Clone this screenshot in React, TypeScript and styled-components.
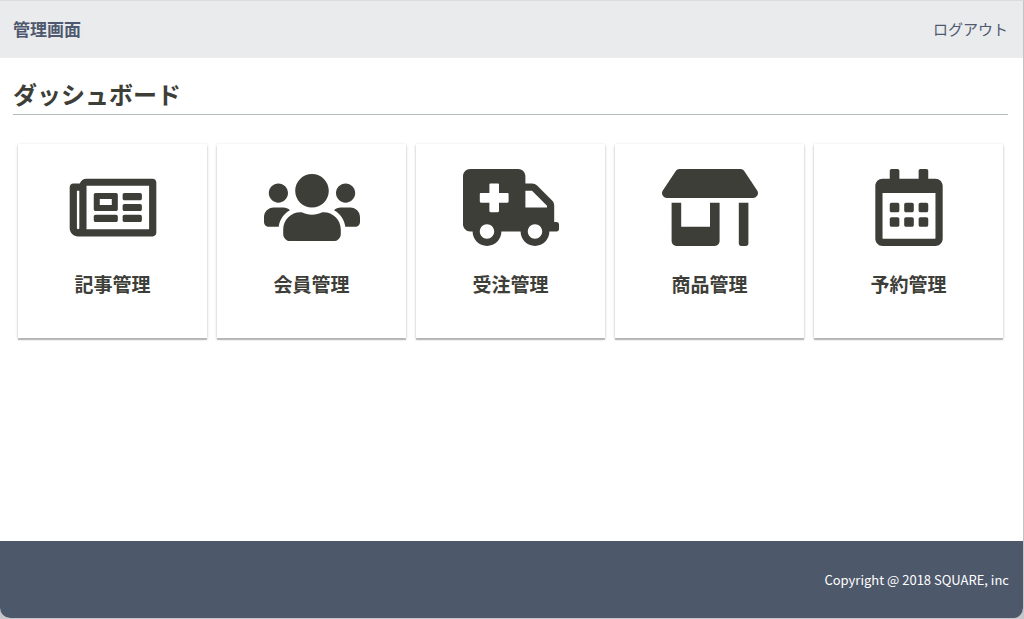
import React from 'react';
import styled, { createGlobalStyle } from 'styled-components';
import { FaRegNewspaper, FaUsers, FaAmbulance, FaStoreAlt, FaRegCalendarAlt } from 'react-icons/fa';
import type { IconType } from 'react-icons';

const GlobalStyle = createGlobalStyle`
  * {
    box-sizing: border-box;
  }
  body {
    margin: 0;
    background: #c6c7ca;
    color: #3e3e39;
    font-family: "Noto Sans CJK JP", sans-serif;
  }
  a {
    color: inherit;
    text-decoration: none;
  }
`;

const Page = styled.div`
  display: flex;
  flex-direction: column;
  min-height: calc(100vh - 1px);
  margin-bottom: 1px;
  background: #fff;
  border-top: 1px solid #dbdcdd;
  border-right: 1px solid #c3c4c5;
  border-radius: 0 0 10px 10px;
  overflow: hidden;
`;

const Header = styled.header`
  display: flex;
  align-items: center;
  justify-content: space-between;
  height: 57px;
  padding: 0 15px 2px 13px;
  background: #e9ebed;
  color: #4e586e;
`;

const SiteName = styled.a`
  font-size: 17px;
  font-weight: 700;
`;

const Logout = styled.a`
  font-size: 15px;
`;

const Main = styled.main`
  flex: 1;
  padding: 19px 15px 24px 13px;
`;

const Title = styled.h1`
  margin: 0 0 29px;
  padding-bottom: 3px;
  border-bottom: 1px solid #b2bdbe;
  font-size: 24px;
  line-height: 34px;
  font-weight: 700;
`;

const Menu = styled.nav`
  display: grid;
  grid-template-columns: repeat(5, 1fr);
  gap: 10px;
  padding: 0 5px;
`;

const Card = styled.a`
  display: flex;
  flex-direction: column;
  align-items: center;
  gap: 23px;
  padding: 25px 8px 39px;
  background: #fff;
  box-shadow: 0 1px 3px rgba(0, 0, 0, 0.2), 0 2px 1px rgba(0, 0, 0, 0.2);

  svg {
    width: 96px;
    height: 77px;
  }
`;

const CardLabel = styled.span`
  font-size: 19px;
  line-height: 30px;
  font-weight: 700;
`;

const Footer = styled.footer`
  display: flex;
  align-items: center;
  justify-content: flex-end;
  height: 77px;
  padding: 0 14px;
  background: #4e586b;
  color: #fff;
`;

const Copyright = styled.small`
  font-size: 13px;
`;

const items: { label: string; Icon: IconType }[] = [
  { label: '記事管理', Icon: FaRegNewspaper },
  { label: '会員管理', Icon: FaUsers },
  { label: '受注管理', Icon: FaAmbulance },
  { label: '商品管理', Icon: FaStoreAlt },
  { label: '予約管理', Icon: FaRegCalendarAlt },
];

export default function App() {
  return (
    <>
      <GlobalStyle />
      <Page>
        <Header>
          <SiteName href="#">管理画面</SiteName>
          <Logout href="#">ログアウト</Logout>
        </Header>
        <Main>
          <Title>ダッシュボード</Title>
          <Menu>
            {items.map(({ label, Icon }) => (
              <Card key={label} href="#">
                <Icon aria-hidden="true" />
                <CardLabel>{label}</CardLabel>
              </Card>
            ))}
          </Menu>
        </Main>
        <Footer>
          <Copyright>Copyright @ 2018 SQUARE, inc</Copyright>
        </Footer>
      </Page>
    </>
  );
}
